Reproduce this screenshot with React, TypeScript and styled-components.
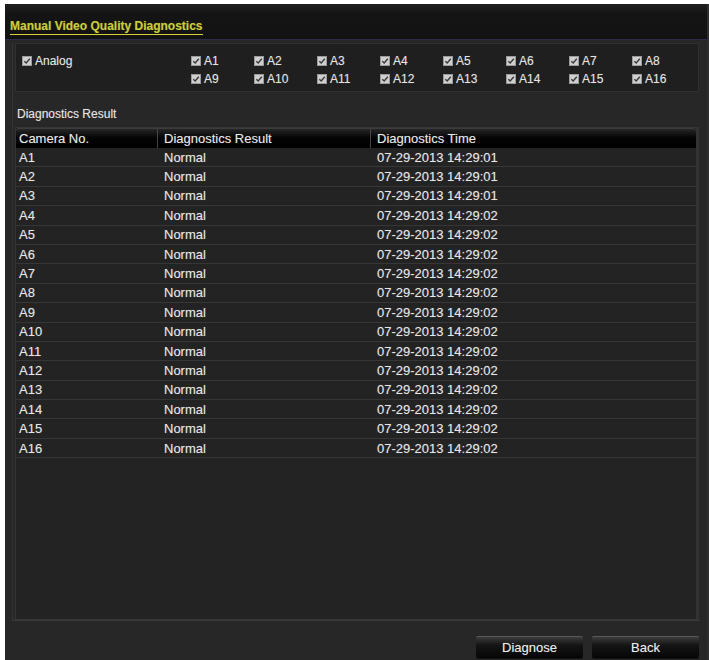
import React from "react";
import styled, { createGlobalStyle } from "styled-components";

const Global = createGlobalStyle`
  html, body { margin: 0; padding: 0; background: #ffffff; }
  body { font-family: "Liberation Sans", Arial, sans-serif; }
`;

const Page = styled.div`
  padding: 4px 0 0 5px;
`;

const Window = styled.div`
  width: 704px;
  height: 656px;
  background: #272727;
  display: flex;
  flex-direction: column;
  box-sizing: border-box;
  border-right: 2px solid #2e2e2e;
  text-shadow: 0 0 1px rgba(255, 255, 255, 0.3);
`;

const TitleBar = styled.div`
  height: 36px;
  flex: none;
  background: linear-gradient(#1e1e1e, #141414 30%, #121212);
  border-bottom: 1px solid #2c2c4a;
  display: flex;
  align-items: flex-end;
  padding: 0 0 4px 5px;
  box-sizing: border-box;
`;

const Title = styled.span`
  font-size: 12px;
  font-weight: 700;
  color: #c9cb3c;
  line-height: 14px;
  padding-bottom: 1px;
  border-bottom: 1px solid #d7d23a;
  text-shadow: 0 0 1px rgba(220, 220, 60, 0.4);
`;

const Frame = styled.div`
  margin: 3px 0 0 7px;
  width: 688px;
  height: 578px;
  border-left: 1px solid #343434;
  border-bottom: 1px solid #3a3a3a;
  box-sizing: border-box;
  padding: 0 1px 0 2px;
  display: flex;
  flex-direction: column;
`;

const ChannelBox = styled.div`
  height: 49px;
  box-sizing: border-box;
  background: #1f1f1f;
  border: 1px solid #303030;
  padding: 8px 0 0 6px;
  display: grid;
  grid-template-columns: 169px repeat(8, 63px);
  grid-template-rows: 18px 18px;
`;

const Check = styled.label<{ $span?: boolean }>`
  display: flex;
  align-items: center;
  gap: 3px;
  font-size: 12px;
  color: #e4e4e4;
  grid-row: ${(p) => (p.$span ? "1 / span 2" : "auto")};
  align-self: ${(p) => (p.$span ? "start" : "stretch")};
  height: 18px;
`;

const Box = styled.span`
  width: 10px;
  height: 10px;
  flex: none;
  background: #cfcfcf;
  border: 1px solid #9a9a9a;
  box-sizing: border-box;
  display: flex;
  align-items: center;
  justify-content: center;
`;

const SectionLabel = styled.div`
  font-size: 12px;
  color: #e4e4e4;
  height: 35px;
  line-height: 14px;
  padding: 15px 0 0 2px;
  box-sizing: border-box;
`;

const Table = styled.div`
  flex: 1;
  background: #232323;
  border: 1px solid #363636;
  border-right: 3px solid #333;
  display: flex;
  flex-direction: column;
`;

const HeaderRow = styled.div`
  height: 20px;
  flex: none;
  display: grid;
  grid-template-columns: 141px 213px 1fr;
  background: linear-gradient(#262626, #050505 45%, #000000);
  border-top: 1px solid #3c3c3c;
  border-radius: 3px 3px 0 0;
  box-sizing: border-box;
`;

const HeadCell = styled.div<{ $divider?: boolean }>`
  font-size: 13px;
  color: #e8e8e8;
  display: flex;
  align-items: center;
  padding-left: ${(p) => (p.$divider ? "6px" : "3px")};
  border-left: ${(p) => (p.$divider ? "1px solid #444" : "none")};
`;

const Row = styled.div`
  height: 19.4px;
  flex: none;
  display: grid;
  grid-template-columns: 141px 213px 1fr;
  border-bottom: 1px solid #363636;
  box-sizing: border-box;
`;

const Cell = styled.div<{ $first?: boolean }>`
  font-size: 13px;
  color: #e6e6e6;
  display: flex;
  align-items: center;
  padding-left: ${(p) => (p.$first ? "3px" : "7px")};
`;

const Footer = styled.div`
  flex: 1;
  display: flex;
  justify-content: flex-end;
  align-items: flex-start;
  gap: 9px;
  padding: 15px 8px 0 0;
`;

const Button = styled.button`
  width: 107px;
  height: 22px;
  font-family: "Liberation Sans", Arial, sans-serif;
  font-size: 13px;
  color: #ececec;
  text-shadow: 0 0 1px rgba(255, 255, 255, 0.3);
  background: linear-gradient(#3a3a3a, #141414 40%, #060606);
  border: none;
  border-top: 1px solid #5a5a5a;
  border-radius: 2px;
  box-shadow: 0 1px 0 #111;
  padding: 0;
`;

const Tick = () => (
  <svg width="8" height="8" viewBox="0 0 8 8">
    <path d="M1.3 4.2 L3.2 6 L6.8 1.8" stroke="#3a3a3a" strokeWidth="1.4" fill="none" />
  </svg>
);

const CheckItem: React.FC<{ label: string; span?: boolean }> = ({ label, span }) => (
  <Check $span={span}>
    <Box>
      <Tick />
    </Box>
    {label}
  </Check>
);

const first = ["A1", "A2", "A3", "A4", "A5", "A6", "A7", "A8"];
const second = ["A9", "A10", "A11", "A12", "A13", "A14", "A15", "A16"];

const results = Array.from({ length: 16 }, (_, i) => ({
  cam: `A${i + 1}`,
  result: "Normal",
  time: i < 3 ? "07-29-2013 14:29:01" : "07-29-2013 14:29:02",
}));

export default function App() {
  return (
    <Page>
      <Global />
      <Window>
        <TitleBar>
          <Title>Manual Video Quality Diagnostics</Title>
        </TitleBar>
        <Frame>
          <ChannelBox>
            <CheckItem label="Analog" span />
            {first.map((c) => (
              <CheckItem key={c} label={c} />
            ))}
            {second.map((c) => (
              <CheckItem key={c} label={c} />
            ))}
          </ChannelBox>
          <SectionLabel>Diagnostics Result</SectionLabel>
          <Table>
            <HeaderRow>
              <HeadCell>Camera No.</HeadCell>
              <HeadCell $divider>Diagnostics Result</HeadCell>
              <HeadCell $divider>Diagnostics Time</HeadCell>
            </HeaderRow>
            {results.map((r) => (
              <Row key={r.cam}>
                <Cell $first>{r.cam}</Cell>
                <Cell>{r.result}</Cell>
                <Cell>{r.time}</Cell>
              </Row>
            ))}
          </Table>
        </Frame>
        <Footer>
          <Button>Diagnose</Button>
          <Button>Back</Button>
        </Footer>
      </Window>
    </Page>
  );
}
